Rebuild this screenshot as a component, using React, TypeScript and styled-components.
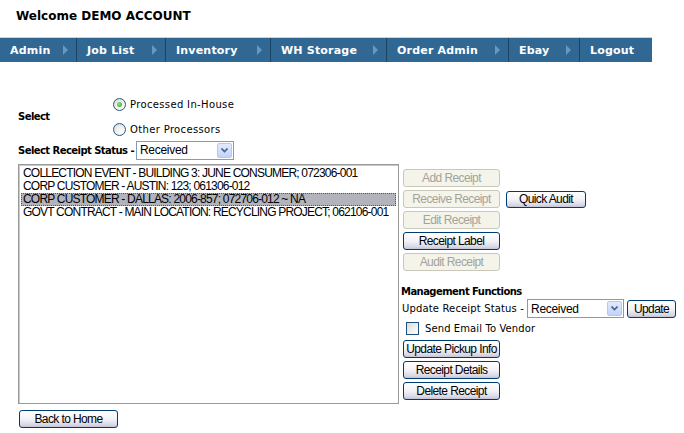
import React from "react";
import styled, { createGlobalStyle, css } from "styled-components";

const Global = createGlobalStyle`
  html, body { margin: 0; padding: 0; background: #fff; }
  body { font-family: "DejaVu Sans", Verdana, sans-serif; color: #000; }
`;

const Page = styled.div`
  width: 684px;
  height: 433px;
  overflow: hidden;
  position: relative;
`;

const Welcome = styled.div`
  padding: 9px 0 0 16px;
  height: 28px;
  box-sizing: border-box;
  font-family: "DejaVu Sans", Tahoma, sans-serif;
  font-weight: bold;
  font-size: 12px;
  letter-spacing: 0;
`;

const Nav = styled.nav`
  margin-top: 9px;
  width: 652px;
  height: 25px;
  display: flex;
  background: #316893;
  border-top: 1px solid #c6d3de;
  box-sizing: border-box;
`;

const NavItem = styled.div<{ $w: number; $last?: boolean }>`
  width: ${(p) => p.$w}px;
  flex: none;
  display: flex;
  align-items: center;
  box-sizing: border-box;
  padding-left: 10px;
  padding-right: 8px;
  border-right: ${(p) => (p.$last ? "none" : "1px solid #1b4464")};
  color: #fff;
  font-weight: bold;
  font-size: 11px;
  letter-spacing: 0.2px;
`;

const NavLabel = styled.span`
  flex: 1;
`;

const Arrow = styled.span`
  width: 0;
  height: 0;
  border-top: 5px solid transparent;
  border-bottom: 5px solid transparent;
  border-left: 5px solid #6a97bd;
`;

const Form = styled.div`
  padding: 32px 0 0 18px;
`;

const SelectRow = styled.div`
  display: flex;
  align-items: center;
  height: 45px;
`;

const BoldLabel = styled.div<{ $w?: number }>`
  font-weight: bold;
  font-size: 10px;
  letter-spacing: -0.55px;
  white-space: nowrap;
  ${(p) => p.$w && css`width: ${p.$w}px;`}
`;

const RadioCol = styled.div`
  display: flex;
  flex-direction: column;
  gap: 12px;
`;

const Choice = styled.label`
  display: flex;
  align-items: center;
  gap: 4px;
  font-size: 10px;
  letter-spacing: 0.35px;
  height: 13px;
`;

const RadioDot = styled.span<{ $on?: boolean }>`
  width: 13px;
  height: 13px;
  border-radius: 50%;
  box-sizing: border-box;
  border: 1px solid #2a5784;
  background: radial-gradient(circle at 65% 70%, #ffffff 0%, #f0f0ea 45%, #d6d4c8 100%);
  display: flex;
  align-items: center;
  justify-content: center;
  &::after {
    content: "";
    display: ${(p) => (p.$on ? "block" : "none")};
    width: 5px;
    height: 5px;
    border-radius: 50%;
    background: radial-gradient(circle at 40% 40%, #8ee88e, #21a121);
  }
`;

const StatusRow = styled.div`
  display: flex;
  align-items: center;
  gap: 2px;
  height: 20px;
  margin-top: 1px;
`;

const DropBox = styled.div<{ $w: number }>`
  width: ${(p) => p.$w}px;
  height: 19px;
  box-sizing: border-box;
  border: 1px solid #7f9db9;
  display: flex;
  align-items: center;
  background: #fff;
  font-family: "Liberation Sans", Arial, sans-serif;
  font-size: 12px;
  letter-spacing: -0.3px;
  padding-left: 3px;
`;

const DropText = styled.span`
  flex: 1;
`;

const DropBtn = styled.span`
  width: 15px;
  height: 15px;
  margin-right: 1px;
  box-sizing: border-box;
  border: 1px solid #b5c8f2;
  border-radius: 2px;
  background: linear-gradient(#e2eafd, #c1d3fb);
  display: flex;
  align-items: center;
  justify-content: center;
`;

const Main = styled.div`
  display: flex;
  gap: 4px;
  margin-top: 4px;
`;

const ListBox = styled.div`
  width: 381px;
  height: 240px;
  box-sizing: border-box;
  border: 1px solid #9a9a9a;
  box-shadow: inset 1px 1px 0 #c8c8c8;
  padding: 2px 2px;
  font-family: "Liberation Sans", Arial, sans-serif;
  font-size: 12px;
  line-height: 13px;
`;

const ListItem = styled.div<{ $sel?: boolean }>`
  padding-left: 2px;
  white-space: nowrap;
  height: 13px;
  box-sizing: border-box;
  letter-spacing: -0.8px;
  ${(p) =>
    p.$sel &&
    css`
      background: #b3b3bc;
      outline: 1px dotted #555;
      outline-offset: -1px;
    `}
`;

const Side = styled.div`
  display: flex;
  flex-direction: column;
  padding-top: 5px;
`;

const BtnRow = styled.div`
  display: flex;
  gap: 6px;
  align-items: center;
`;

const Stack = styled.div<{ $gap: number; $top?: number }>`
  display: flex;
  flex-direction: column;
  gap: ${(p) => p.$gap}px;
  margin-top: ${(p) => p.$top ?? 0}px;
`;

const Btn = styled.button<{ $w: number; $h?: number }>`
  width: ${(p) => p.$w}px;
  height: ${(p) => p.$h ?? 18}px;
  box-sizing: border-box;
  padding: 0;
  white-space: nowrap;
  font-family: "Liberation Sans", Arial, sans-serif;
  font-size: 12px;
  letter-spacing: -0.6px;
  color: #000;
  border: 1px solid #003c74;
  border-radius: 3px;
  background: linear-gradient(#ffffff 0%, #f3f3f7 50%, #d9d9e6 85%, #c3c3d6 100%);
  &:disabled {
    color: #a3a39c;
    border-color: #c9c7ba;
    background: #f5f4ea;
  }
`;

const MgmtTitle = styled(BoldLabel)`
  margin-top: 15px;
  margin-left: -2px;
  height: 12px;
  line-height: 12px;
`;

const UpdateRow = styled.div`
  display: flex;
  align-items: center;
  margin-top: 1px;
  margin-left: -1px;
  gap: 3px;
  font-size: 10px;
  letter-spacing: 0.15px;
`;

const CheckRow = styled.label`
  display: flex;
  align-items: center;
  gap: 6px;
  margin-top: 4px;
  margin-left: 3px;
  height: 13px;
  font-size: 10px;
  letter-spacing: 0.1px;
`;

const CheckBox = styled.span`
  width: 13px;
  height: 13px;
  box-sizing: border-box;
  border: 1px solid #1c5180;
  background: linear-gradient(135deg, #dcdcd7, #ffffff);
`;

const Footer = styled.div`
  margin-top: 4px;
  padding-left: 1px;
`;

const navItems = [
  { label: "Admin", w: 77 },
  { label: "Job List", w: 89 },
  { label: "Inventory", w: 105 },
  { label: "WH Storage", w: 116 },
  { label: "Order Admin", w: 122 },
  { label: "Ebay", w: 71 },
  { label: "Logout", w: 72, last: true },
];

const receipts = [
  "COLLECTION EVENT - BUILDING 3: JUNE CONSUMER; 072306-001",
  "CORP CUSTOMER - AUSTIN: 123; 061306-012",
  "CORP CUSTOMER - DALLAS: 2006-857; 072706-012 ~ NA",
  "GOVT CONTRACT - MAIN LOCATION: RECYCLING PROJECT; 062106-001",
];

const Chevron = () => (
  <svg width="7" height="5" viewBox="0 0 7 5">
    <path d="M0.5 0.5 L3.5 3.5 L6.5 0.5" stroke="#4d6185" strokeWidth="1.6" fill="none" />
  </svg>
);

const Drop = ({ w, value }: { w: number; value: string }) => (
  <DropBox $w={w}>
    <DropText>{value}</DropText>
    <DropBtn>
      <Chevron />
    </DropBtn>
  </DropBox>
);

export default function App() {
  return (
    <Page>
      <Global />
      <Welcome>Welcome DEMO ACCOUNT</Welcome>
      <Nav>
        {navItems.map((n) => (
          <NavItem key={n.label} $w={n.w} $last={n.last}>
            <NavLabel>{n.label}</NavLabel>
            {!n.last && <Arrow />}
          </NavItem>
        ))}
      </Nav>
      <Form>
        <SelectRow>
          <BoldLabel $w={95}>Select</BoldLabel>
          <RadioCol>
            <Choice>
              <RadioDot $on />
              Processed In-House
            </Choice>
            <Choice>
              <RadioDot />
              Other Processors
            </Choice>
          </RadioCol>
        </SelectRow>
        <StatusRow>
          <BoldLabel>Select Receipt Status -</BoldLabel>
          <Drop w={98} value="Received" />
        </StatusRow>
        <Main>
          <ListBox>
            {receipts.map((r, i) => (
              <ListItem key={r} $sel={i === 2}>
                {r}
              </ListItem>
            ))}
          </ListBox>
          <Side>
            <Stack $gap={3}>
              <Btn $w={97} disabled>Add Receipt</Btn>
              <BtnRow>
                <Btn $w={97} disabled>Receive Receipt</Btn>
                <Btn $w={80} $h={17}>Quick Audit</Btn>
              </BtnRow>
              <Btn $w={97} disabled>Edit Receipt</Btn>
              <Btn $w={97}>Receipt Label</Btn>
              <Btn $w={97} disabled>Audit Receipt</Btn>
            </Stack>
            <MgmtTitle>Management Functions</MgmtTitle>
            <UpdateRow>
              <span>Update Receipt Status -</span>
              <Drop w={97} value="Received" />
              <Btn $w={49}>Update</Btn>
            </UpdateRow>
            <CheckRow>
              <CheckBox />
              Send Email To Vendor
            </CheckRow>
            <Stack $gap={3} $top={5}>
              <Btn $w={97}>Update Pickup Info</Btn>
              <Btn $w={97}>Receipt Details</Btn>
              <Btn $w={97}>Delete Receipt</Btn>
            </Stack>
          </Side>
        </Main>
        <Footer>
          <Btn $w={99}>Back to Home</Btn>
        </Footer>
      </Form>
    </Page>
  );
}
